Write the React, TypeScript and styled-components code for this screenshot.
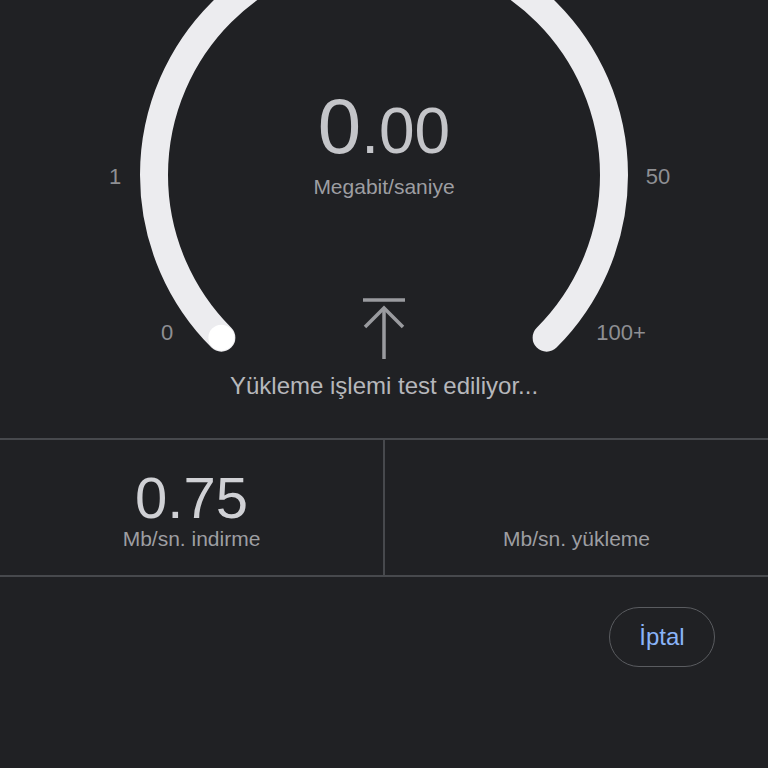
import React from "react";
import styled, { createGlobalStyle } from "styled-components";

const GlobalStyle = createGlobalStyle`
  html, body { margin:0; padding:0; background:#202124; }
  body { font-family:"Liberation Sans", Arial, sans-serif; }
  #root { min-height:768px; background:#202124; }
`;

const Page = styled.main`
  width:768px; min-height:768px; background:#202124; display:flex; flex-direction:column;
`;

const Gauge = styled.section`
  position:relative; height:438px; box-sizing:border-box; padding-top:87px;
  display:flex; flex-direction:column; align-items:center;
`;

const Dial = styled.svg`
  position:absolute; left:0; top:0; width:768px; height:438px; pointer-events:none;
`;

const Tick = styled.span<{ $x: number; $y: number }>`
  position:absolute; left:${p => p.$x}px; top:${p => p.$y}px; transform:translate(-50%, -50%);
  font-size:22px; color:#8e8f93; line-height:1;
`;

const Readout = styled.div`
  position:relative; color:#c4c5c9; line-height:1; display:flex; align-items:baseline; height:78px;
`;
const Whole = styled.span` font-size:78px; `;
const Frac = styled.span` font-size:64px; `;

const Unit = styled.div`
  position:relative; margin-top:11px; font-size:21px; line-height:1; color:#9d9ea2;
`;

const IconWrap = styled.div`
  position:relative; margin-top:100px; width:42px; height:62px;
`;

const Status = styled.div`
  position:relative; margin-top:15px; font-size:24px; line-height:1; color:#b6b7bb;
`;

const Stats = styled.section`
  display:grid; grid-template-columns:1fr 2px 1fr;
  border-top:2px solid #47494d; border-bottom:2px solid #47494d;
`;

const Divider = styled.div` background:#47494d; `;

const Cell = styled.div`
  display:flex; flex-direction:column; align-items:center; padding:29px 0 26px;
`;

const Value = styled.div`
  font-size:58px; line-height:1; height:58px; color:#d0d1d5;
`;

const Label = styled.div`
  margin-top:1px; font-size:21px; line-height:1; color:#9d9ea2;
`;

const Actions = styled.div`
  display:flex; justify-content:flex-end; padding:30px 53px 0 0;
`;

const CancelButton = styled.button`
  width:106px; height:60px; border-radius:30px; border:1.5px solid #5a5c60; background:transparent;
  color:#8ab4f8; font-family:"Liberation Sans", Arial, sans-serif; font-size:24px; cursor:pointer;
`;

function UploadIcon() {
  return (
    <svg width="42" height="62" viewBox="0 0 42 62" fill="none" stroke="#9a9b9f" strokeWidth="3.5">
      <line x1="0" y1="3" x2="42" y2="3" />
      <line x1="21" y1="11" x2="21" y2="62" />
      <polyline points="2,30 21,11 40,30" />
    </svg>
  );
}

const cx = 384, cy = 175, r = 230;
const off = r * Math.SQRT1_2;

export default function App() {
  return (
    <Page>
      <GlobalStyle />
      <Gauge>
        <Dial viewBox="0 0 768 438">
          <path
            d={`M ${cx - off} ${cy + off} A ${r} ${r} 0 1 1 ${cx + off} ${cy + off}`}
            stroke="#ececef" strokeWidth="28" strokeLinecap="round" fill="none"
          />
          <circle cx={cx - off} cy={cy + off} r="13" fill="#ffffff" />
        </Dial>
        <Tick $x={115} $y={177}>1</Tick>
        <Tick $x={658} $y={177}>50</Tick>
        <Tick $x={167} $y={333}>0</Tick>
        <Tick $x={621} $y={333}>100+</Tick>
        <Readout><Whole>0</Whole><Frac>.00</Frac></Readout>
        <Unit>Megabit/saniye</Unit>
        <IconWrap><UploadIcon /></IconWrap>
        <Status>Yükleme işlemi test ediliyor...</Status>
      </Gauge>
      <Stats>
        <Cell>
          <Value>0.75</Value>
          <Label>Mb/sn. indirme</Label>
        </Cell>
        <Divider />
        <Cell>
          <Value>&nbsp;</Value>
          <Label>Mb/sn. yükleme</Label>
        </Cell>
      </Stats>
      <Actions>
        <CancelButton>İptal</CancelButton>
      </Actions>
    </Page>
  );
}
